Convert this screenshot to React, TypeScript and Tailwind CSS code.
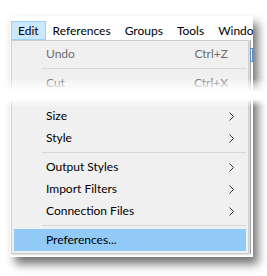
import React from 'react';

const MENUBAR = ['Edit', 'References', 'Groups', 'Tools', 'Window'];

type Row =
  | { kind: 'item'; label: string; shortcut?: string; sub?: boolean; disabled?: boolean; active?: boolean }
  | { kind: 'sep' }
  | { kind: 'gap' };

const ROWS: Row[] = [
  { kind: 'item', label: 'Undo', shortcut: 'Ctrl+Z', disabled: true },
  { kind: 'sep' },
  { kind: 'item', label: 'Cut', shortcut: 'Ctrl+X', disabled: true },
  { kind: 'gap' },
  { kind: 'item', label: 'Size', sub: true },
  { kind: 'item', label: 'Style', sub: true },
  { kind: 'sep' },
  { kind: 'item', label: 'Output Styles', sub: true },
  { kind: 'item', label: 'Import Filters', sub: true },
  { kind: 'item', label: 'Connection Files', sub: true },
  { kind: 'sep' },
  { kind: 'item', label: 'Preferences...', active: true },
];

function Chevron() {
  return (
    <svg width="5" height="9" viewBox="0 0 5 9" className="text-[#333]">
      <polyline points="0.5,0.5 4.5,4.5 0.5,8.5" fill="none" stroke="currentColor" strokeWidth="1" />
    </svg>
  );
}

export default function App() {
  return (
    <div className="relative w-[267px] h-[276px] bg-white overflow-hidden font-['Segoe_UI','Lato',sans-serif] text-[12px] text-black">
      {/* screenshot */}
      <div className="relative ml-[10px] mt-[16px] w-[243px] h-[241px] bg-white shadow-[5px_7px_9px_rgba(0,0,0,0.55)]">
        <div className="w-full h-full overflow-hidden">
          {/* menu bar */}
          <div className="flex h-[24px] pt-[5px] pl-[1px] whitespace-nowrap">
            {MENUBAR.map((m, i) => (
              <div
                key={m}
                className={`shrink-0 h-[19px] px-[6px] flex items-center leading-none border ${
                  i === 0 ? 'bg-[#cce8ff] border-[#99d1ff]' : 'border-transparent'
                }`}
              >
                {m}
              </div>
            ))}
          </div>

          <div className="flex">
            <div className="w-[1px]" />
            {/* dropdown */}
            <div className="w-[238px] bg-[#f0f0f0] border border-[#cccccc] p-[2px] shadow-[1px_1px_1px_rgba(0,0,0,0.12)]">
              {ROWS.map((r, i) => {
                if (r.kind === 'sep')
                  return (
                    <div key={i} className="h-[7px] pt-[3px] pl-[28px]">
                      <div className="h-[1px] bg-[#d7d7d7]" />
                    </div>
                  );
                if (r.kind === 'gap') return <div key={i} className="h-[11px]" />;
                return (
                  <div
                    key={i}
                    className={`h-[22px] flex items-center pl-[32px] pr-[12px] ${
                      r.active ? 'bg-[#91c9f7]' : ''
                    } ${r.disabled ? 'text-[#6d6d6d]' : 'text-black'}`}
                  >
                    <span className="flex-1">{r.label}</span>
                    {r.shortcut && <span className="mr-[6px]">{r.shortcut}</span>}
                    {r.sub && <Chevron />}
                  </div>
                );
              })}
            </div>
            {/* app content peeking out */}
            <div className="flex-1 relative">
              <div className="absolute left-[1px] top-0 bottom-0 w-[1px] bg-[#a0a0a0]" />
              <div className="absolute left-[1px] top-[8px] w-[3px] h-[14px] border border-[#5b8fc2]" />
            </div>
          </div>
        </div>
      </div>

      {/* torn edge */}
      <div className="absolute left-0 right-0 top-[78px] h-[29px] bg-[linear-gradient(to_bottom,rgba(255,255,255,0)_0%,rgba(255,255,255,0.55)_22%,#fff_48%,#fff_72%,rgba(255,255,255,0)_100%)]" />
    </div>
  );
}
